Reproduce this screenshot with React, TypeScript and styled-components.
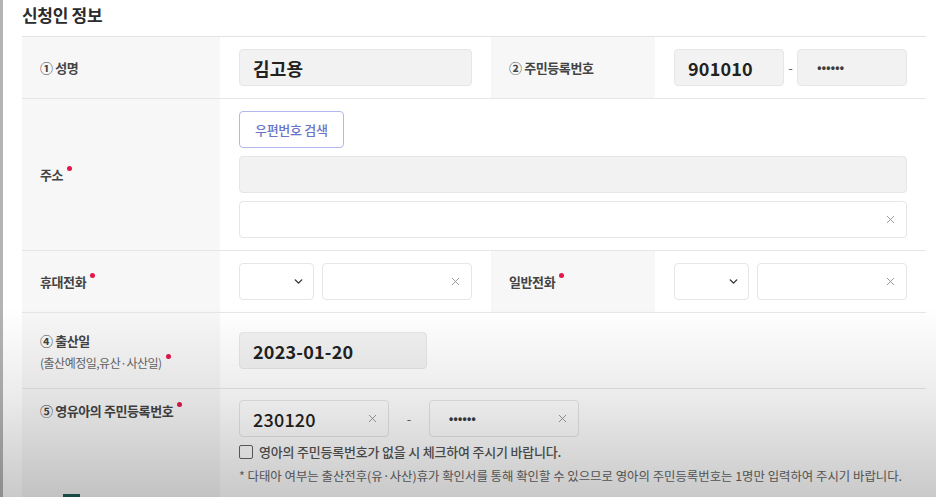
import React from 'react'
import styled, { createGlobalStyle } from 'styled-components'
import { ChevronDown, X } from 'lucide-react'

const GlobalStyle = createGlobalStyle`
  html, body {
    margin: 0;
    padding: 0;
    background: #fff;
    font-family: 'Noto Sans CJK KR', 'Noto Sans', sans-serif;
    color: #333;
    overflow: hidden;
  }
`

const App = () => {
  return (
    <Page>
      <GlobalStyle />
      <Content>
        <Title>신청인 정보</Title>
        <Table>
          <Row>
            <LabelCell>
              <Label>① 성명</Label>
            </LabelCell>
            <ValueCell>
              <Field readOnly>
                <FieldText>김고용</FieldText>
              </Field>
            </ValueCell>
            <LabelCell>
              <Label>② 주민등록번호</Label>
            </LabelCell>
            <ValueCell>
              <InlineGroup>
                <Field readOnly width={114}>
                  <FieldText>901010</FieldText>
                </Field>
                <Dash>-</Dash>
                <Field readOnly width={114}>
                  <Masked>••••••</Masked>
                </Field>
              </InlineGroup>
            </ValueCell>
          </Row>

          <Row>
            <LabelCell>
              <Label>
                주소<Required />
              </Label>
            </LabelCell>
            <ValueCell wide>
              <Stack>
                <ZipButton>우편번호 검색</ZipButton>
                <Field readOnly />
                <Field>
                  <Spacer />
                  <Clear />
                </Field>
              </Stack>
            </ValueCell>
          </Row>

          <Row>
            <LabelCell>
              <Label>
                휴대전화<Required />
              </Label>
            </LabelCell>
            <ValueCell>
              <InlineGroup>
                <Select />
                <Field width={151}>
                  <Spacer />
                  <Clear />
                </Field>
              </InlineGroup>
            </ValueCell>
            <LabelCell>
              <Label>
                일반전화<Required />
              </Label>
            </LabelCell>
            <ValueCell>
              <InlineGroup>
                <Select />
                <Field width={150}>
                  <Spacer />
                  <Clear />
                </Field>
              </InlineGroup>
            </ValueCell>
          </Row>

          <Row>
            <LabelCell>
              <LabelStack>
                <Label>④ 출산일</Label>
                <SubLabel>
                  (출산예정일,유산·사산일)<Required />
                </SubLabel>
              </LabelStack>
            </LabelCell>
            <ValueCell wide pad={19}>
              <Field readOnly width={188}>
                <FieldText weight={600}>2023-01-20</FieldText>
              </Field>
            </ValueCell>
          </Row>

          <Row last>
            <LabelCell top>
              <Label>
                ⑤ 영유아의 주민등록번호<Required />
              </Label>
            </LabelCell>
            <ValueCell wide last pad={11}>
              <InlineGroup>
                <Field width={150}>
                  <FieldText weight={500}>230120</FieldText>
                  <Clear />
                </Field>
                <Dash wide>-</Dash>
                <Field width={150}>
                  <Masked>••••••</Masked>
                  <Clear />
                </Field>
              </InlineGroup>
              <CheckRow>
                <CheckBox />
                <CheckText>영아의 주민등록번호가 없을 시 체크하여 주시기 바랍니다.</CheckText>
              </CheckRow>
              <Note>
                * 다태아 여부는 출산전후(유·사산)휴가 확인서를 통해 확인할 수 있으므로 영아의 주민등록번호는 1명만 입력하여 주시기 바랍니다.
              </Note>
            </ValueCell>
          </Row>

          <FooterRow>
            <FooterLabel>
              <GreenButton />
            </FooterLabel>
            <div />
          </FooterRow>
        </Table>
      </Content>
      <Shade />
    </Page>
  )
}

const Clear = () => (
  <ClearIcon>
    <X size={13} strokeWidth={1.6} />
  </ClearIcon>
)

const Select = () => (
  <SelectBox>
    <ChevronDown size={13} strokeWidth={2.6} />
  </SelectBox>
)

export default App

const Page = styled.div`
  position: relative;
  min-height: 497px;
  border-left: 3px solid #b4b4b4;
`

const Content = styled.div`
  padding: 4px 10px 0 19px;
`

const Title = styled.h2`
  margin: 0 0 10px;
  font-size: 17px;
  font-weight: 700;
  line-height: 22px;
  color: #2b2b2b;
  letter-spacing: -0.3px;
`

const Table = styled.div`
  border-top: 1px solid #e3e3e3;
`

const Row = styled.div<{ last?: boolean }>`
  display: grid;
  grid-template-columns: 198px 271px 164px 271px;
  border-bottom: ${p => (p.last ? 'none' : '1px solid #e6e6e6')};
`

const LabelCell = styled.div<{ top?: boolean }>`
  display: flex;
  align-items: ${p => (p.top ? 'flex-start' : 'center')};
  padding: ${p => (p.top ? '12px 18px 0' : '0 18px')};
  background: #f7f7f7;
`

const Label = styled.span`
  position: relative;
  font-size: 13px;
  font-weight: 600;
  color: #444;
  letter-spacing: -0.4px;
`

const LabelStack = styled.div`
  display: flex;
  flex-direction: column;
  gap: 4px;
`

const SubLabel = styled.span`
  position: relative;
  font-size: 12px;
  color: #666;
  letter-spacing: -0.5px;
`

const Required = styled.i`
  display: inline-block;
  width: 5px;
  height: 5px;
  margin-left: 4px;
  border-radius: 50%;
  background: #e4164a;
  vertical-align: 9px;
`

const ValueCell = styled.div<{ wide?: boolean; pad?: number; last?: boolean }>`
  grid-column: ${p => (p.wide ? 'span 3' : 'auto')};
  padding: ${p => p.pad ?? 12}px 19px ${p => (p.last ? 0 : p.pad ?? 12)}px;
  min-width: 0;
`

const Stack = styled.div`
  display: flex;
  flex-direction: column;
  align-items: flex-start;
  gap: 8px;
`

const InlineGroup = styled.div`
  display: flex;
  align-items: center;
  gap: 8px;
`

const Field = styled.div<{ readOnly?: boolean; width?: number }>`
  box-sizing: border-box;
  display: flex;
  align-items: center;
  width: ${p => (p.width ? `${p.width}px` : '100%')};
  height: 37px;
  padding: 0 9px 0 13px;
  border: 1px solid #e6e6e6;
  border-radius: 4px;
  background: ${p => (p.readOnly ? '#f2f2f2' : '#fff')};
`

const FieldText = styled.span<{ weight?: number }>`
  flex: 1;
  font-size: 18px;
  font-weight: ${p => p.weight ?? 700};
  color: #222;
  letter-spacing: 0.2px;
`

const Masked = styled.span`
  flex: 1;
  padding-left: 6px;
  font-family: 'Liberation Sans', Arial, sans-serif;
  font-size: 12px;
  font-weight: 700;
  color: #3c3c3c;
  letter-spacing: 0.3px;
`

const Spacer = styled.span`
  flex: 1;
`

const ClearIcon = styled.span`
  display: flex;
  color: #8c8c8c;
`

const Dash = styled.span<{ wide?: boolean }>`
  width: ${p => (p.wide ? '20px' : '6px')};
  margin: 0 ${p => (p.wide ? '2px' : '-4px')};
  text-align: center;
  font-size: 13px;
  color: #666;
`

const ZipButton = styled.button`
  height: 37px;
  padding: 0 15px;
  border: 1.5px solid #b0b8ec;
  border-radius: 4px;
  background: #fff;
  font-family: inherit;
  font-size: 13px;
  font-weight: 500;
  color: #6a74c6;
  letter-spacing: -0.3px;
`

const SelectBox = styled.div`
  box-sizing: border-box;
  display: flex;
  align-items: center;
  justify-content: flex-end;
  width: 75px;
  height: 37px;
  padding-right: 8px;
  border: 1px solid #e6e6e6;
  border-radius: 4px;
  background: #fff;
  color: #333;
`

const CheckRow = styled.div`
  display: flex;
  align-items: center;
  gap: 6px;
  margin-top: 5px;
`

const CheckBox = styled.span`
  box-sizing: border-box;
  width: 14px;
  height: 14px;
  border: 1.5px solid #666;
  border-radius: 2px;
  background: #fff;
`

const CheckText = styled.span`
  font-size: 13px;
  font-weight: 500;
  color: #555;
  letter-spacing: -0.2px;
`

const Note = styled.p`
  margin: 6px 0 0;
  font-size: 12.4px;
  line-height: 18px;
  color: #666;
  letter-spacing: 0;
  white-space: nowrap;
`

const FooterRow = styled.div`
  display: grid;
  grid-template-columns: 198px 1fr;
`

const FooterLabel = styled.div`
  padding: 9px 0 0 41px;
  background: #f7f7f7;
`

const GreenButton = styled.div`
  width: 17px;
  height: 20px;
  background: #1f5f56;
`

const Shade = styled.div`
  position: fixed;
  inset: 0;
  pointer-events: none;
  background: linear-gradient(
    to bottom,
    rgba(0, 0, 0, 0) 0%,
    rgba(0, 0, 0, 0) 62%,
    rgba(0, 0, 0, 0.08) 80%,
    rgba(0, 0, 0, 0.21) 100%
  );
`
